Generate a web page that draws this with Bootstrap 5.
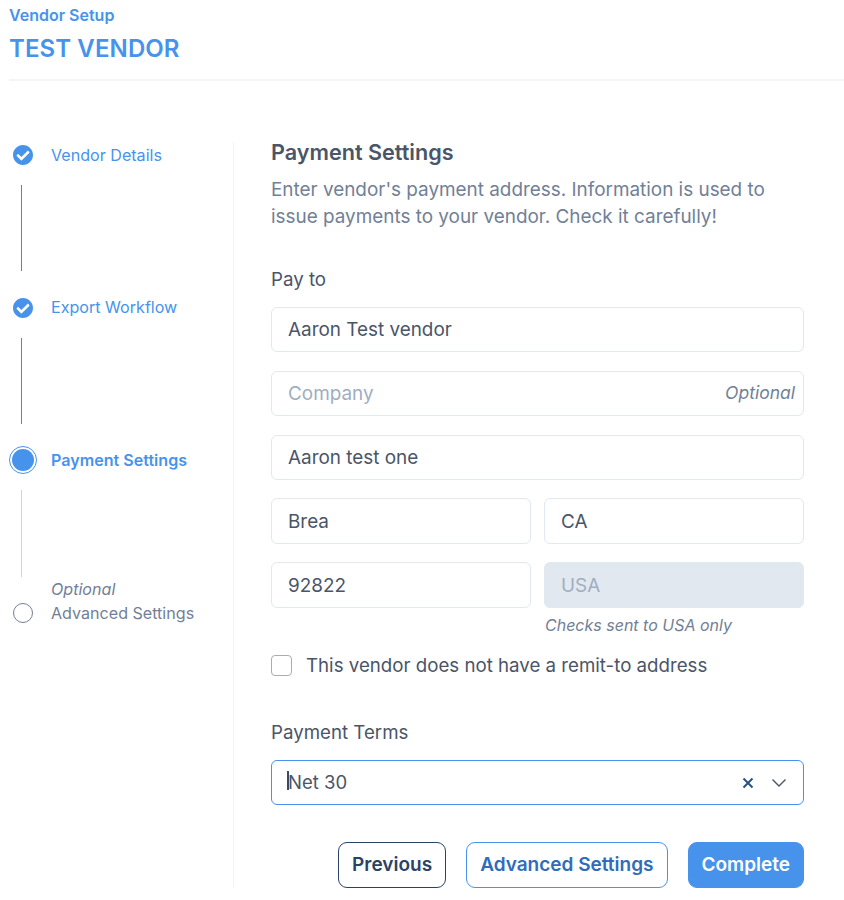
<!DOCTYPE html>
<html lang="en">
<head>
    <meta charset="UTF-8">
    <meta name="viewport" content="width=device-width, initial-scale=1.0">
    <title>Vendor Setup</title>
    <link href="https://cdn.jsdelivr.net/npm/bootstrap@5.3.0/dist/css/bootstrap.min.css" rel="stylesheet">
    <style>
        body {
            font-family: Inter, "Liberation Sans", sans-serif;
            color: #4a5568;
            background: #fff;
        }
        .page-head {
            margin-left: 9px;
            height: 81px;
            padding-top: 5px;
            border-bottom: 2px solid #f4f5f8;
        }
        .head-small {
            font-size: 16px;
            line-height: 20px;
            font-weight: 600;
            color: #4793ec;
        }
        .head-title {
            font-size: 24px;
            line-height: 30px;
            font-weight: 600;
            letter-spacing: .1px;
            color: #4793ec;
            margin: 9px 0 0;
        }
        .wizard {
            margin-top: 61px;
            height: 746px;
        }
        .stepper {
            width: 234px;
            flex: none;
            border-right: 1px solid #f1f3f7;
            padding-left: 9px;
        }
        .step-first { margin-top: -1px; }
        .step-row {
            display: flex;
            align-items: center;
            height: 28px;
            font-size: 16.1px;
            color: #4793ec;
        }
        .step-dot {
            width: 28px;
            flex: none;
            display: flex;
            justify-content: center;
            margin-right: 14px;
        }
        .step-line {
            width: 1px;
            height: 86px;
            margin: 16px 0 22.500px 12px;
            background: #4a86d6;
        }
        .step-line.is-todo {
            background: #cbd5e0;
            height: 86.500px;
            margin-bottom: 0;
        }
        .step-active { font-weight: 600; }
        .radio-on {
            width: 28px;
            height: 28px;
            border-radius: 50%;
            border: 1px solid #4793ec;
            display: flex;
            align-items: center;
            justify-content: center;
        }
        .radio-on span {
            width: 22px;
            height: 22px;
            border-radius: 50%;
            background: #4793ec;
        }
        .radio-off {
            width: 20px;
            height: 20px;
            border-radius: 50%;
            border: 1px solid #718096;
        }
        .step-last-row { display: flex; height: 48px; }
        .step-last-row .step-dot { align-self: flex-end; height: 24px; align-items: center; }
        .step-last {
            color: #718096;
            font-size: 16.1px;
            line-height: 24px;
        }
        .step-last em { display: block; }
        .form-pane {
            width: 533px;
            margin-left: 37px;
        }
        .pane-title {
            font-size: 21.6px;
            line-height: 24px;
            font-weight: 600;
            color: #4a5568;
            margin: -2px 0 12px;
        }
        .pane-text {
            font-size: 18.9px;
            line-height: 27px;
            color: #718096;
            margin: 0 0 36px;
        }
        .field-label {
            font-size: 18.7px;
            line-height: 27px;
            color: #4a5568;
            margin: 0 0 14px;
            display: block;
        }
        .form-control.vendor-input {
            height: 45px;
            font-size: 18.9px;
            padding: 0 16px;
            color: #4a5568;
            border-color: #e2e8f0;
            border-radius: 6px;
        }
        .vendor-input::placeholder { color: #a0aec0; }
        .form-control.vendor-input.tall { height: 46px; }
        .form-control.vendor-input:disabled {
            background: #e2e8f0;
            color: #a0aec0;
            opacity: 1;
        }
        .field-stack { display: flex; flex-direction: column; gap: 19px; }
        .field-wrap { position: relative; }
        .addr-row { --bs-gutter-x: 13px; margin-top: -1px; }
        .optional-tag {
            position: absolute;
            right: 9px;
            top: 10px;
            font-size: 17.5px;
            line-height: 24px;
            font-style: italic;
            color: #718096;
        }
        .usa-note {
            font-size: 16px;
            line-height: 20px;
            font-style: italic;
            color: #718096;
            margin: 7px 0 0 1px;
        }
        .remit-check {
            display: flex;
            align-items: center;
            gap: 14px;
            margin-top: 17px;
            font-size: 18.7px;
            line-height: 27px;
            color: #4a5568;
        }
        .remit-check input.form-check-input {
            width: 21px;
            height: 21px;
            margin: 0;
            border: 1px solid #a0aec0;
            border-radius: 4px;
        }
        .terms-label { margin-top: 40px; }
        .terms-box {
            height: 45px;
            border: 1px solid #4793ec;
            border-radius: 6px;
            display: flex;
            align-items: center;
            padding: 0 16px;
            font-size: 18.500px;
            color: #4a5568;
        }
        .terms-value { flex: 1; position: relative; }
        .caret-bar {
            position: absolute;
            left: -1px;
            top: 2px;
            width: 2px;
            height: 19px;
            background: #3c4a60;
        }
        .terms-clear { margin-right: 17px; }
        .wiz-actions { margin-top: 37px; gap: 20px; }
        .btn.wiz-btn {
            height: 46px;
            font-size: 19px;
            font-weight: 600;
            border-radius: 9px;
            padding: 0 13px;
        }
        .btn.wiz-prev { border: 1px solid #2a4365; color: #2a4365; background: #fff; }
        .btn.wiz-adv { border: 1px solid #4793ec; color: #2f6dbb; background: #fff; }
        .btn.wiz-done { border: 1px solid #4793ec; color: #fff; background: #4793ec; }
    </style>
</head>
<body>
    <div class="page-head">
        <div class="head-small">Vendor Setup</div>
        <h1 class="head-title">TEST VENDOR</h1>
    </div>

    <div class="wizard d-flex">
        <div class="stepper">
            <div class="step-row step-first">
                <div class="step-dot">
                    <svg width="20" height="20" viewBox="8 8 496 496"><path fill="#4793ec" d="M504 256c0 136.967-111.033 248-248 248S8 392.967 8 256 119.033 8 256 8s248 111.033 248 248zM227.314 387.314l184-184c6.248-6.248 6.248-16.379 0-22.627l-22.627-22.627c-6.248-6.249-16.379-6.249-22.628 0L216 308.118l-70.059-70.059c-6.248-6.248-16.379-6.248-22.628 0l-22.627 22.627c-6.248 6.248-6.248 16.379 0 22.627l104 104c6.249 6.249 16.379 6.249 22.628.001z"/></svg>
                </div>
                Vendor Details
            </div>
            <div class="step-line"></div>
            <div class="step-row">
                <div class="step-dot">
                    <svg width="20" height="20" viewBox="8 8 496 496"><path fill="#4793ec" d="M504 256c0 136.967-111.033 248-248 248S8 392.967 8 256 119.033 8 256 8s248 111.033 248 248zM227.314 387.314l184-184c6.248-6.248 6.248-16.379 0-22.627l-22.627-22.627c-6.248-6.249-16.379-6.249-22.628 0L216 308.118l-70.059-70.059c-6.248-6.248-16.379-6.248-22.628 0l-22.627 22.627c-6.248 6.248-6.248 16.379 0 22.627l104 104c6.249 6.249 16.379 6.249 22.628.001z"/></svg>
                </div>
                Export Workflow
            </div>
            <div class="step-line"></div>
            <div class="step-row step-active">
                <div class="step-dot"><div class="radio-on"><span></span></div></div>
                Payment Settings
            </div>
            <div class="step-line is-todo"></div>
            <div class="step-last-row">
                <div class="step-dot"><div class="radio-off"></div></div>
                <div class="step-last"><em>Optional</em>Advanced Settings</div>
            </div>
        </div>

        <div class="form-pane">
            <h2 class="pane-title">Payment Settings</h2>
            <p class="pane-text">Enter vendor's payment address. Information is used to issue payments to your vendor. Check it carefully!</p>

            <label class="field-label">Pay to</label>
            <div class="field-stack">
                <input class="form-control vendor-input" value="Aaron Test vendor">
                <div class="field-wrap">
                    <input class="form-control vendor-input" placeholder="Company">
                    <span class="optional-tag">Optional</span>
                </div>
                <input class="form-control vendor-input" value="Aaron test one">
                <div class="row addr-row">
                    <div class="col-6"><input class="form-control vendor-input tall" value="Brea"></div>
                    <div class="col-6"><input class="form-control vendor-input tall" value="CA"></div>
                </div>
                <div class="row addr-row">
                    <div class="col-6"><input class="form-control vendor-input tall" value="92822"></div>
                    <div class="col-6">
                        <input class="form-control vendor-input tall" value="USA" disabled>
                        <div class="usa-note">Checks sent to USA only</div>
                    </div>
                </div>
            </div>

            <label class="remit-check">
                <input type="checkbox" class="form-check-input">
                This vendor does not have a remit-to address
            </label>

            <label class="field-label terms-label">Payment Terms</label>
            <div class="terms-box">
                <div class="terms-value"><span class="caret-bar"></span>Net 30</div>
                <svg class="terms-clear" width="12" height="12" viewBox="0 0 12 12"><path d="M1.500 1.500l9 9M10.500 1.500l-9 9" stroke="#2c5282" stroke-width="2" fill="none"/></svg>
                <svg width="16" height="16" viewBox="0 0 16 16"><path d="M1.500 4.500L8 11l6.500-6.500" stroke="#4a5568" stroke-width="1.400" fill="none"/></svg>
            </div>

            <div class="d-flex justify-content-end wiz-actions">
                <button class="btn wiz-btn wiz-prev">Previous</button>
                <button class="btn wiz-btn wiz-adv">Advanced Settings</button>
                <button class="btn wiz-btn wiz-done">Complete</button>
            </div>
        </div>
    </div>
</body>
</html>
